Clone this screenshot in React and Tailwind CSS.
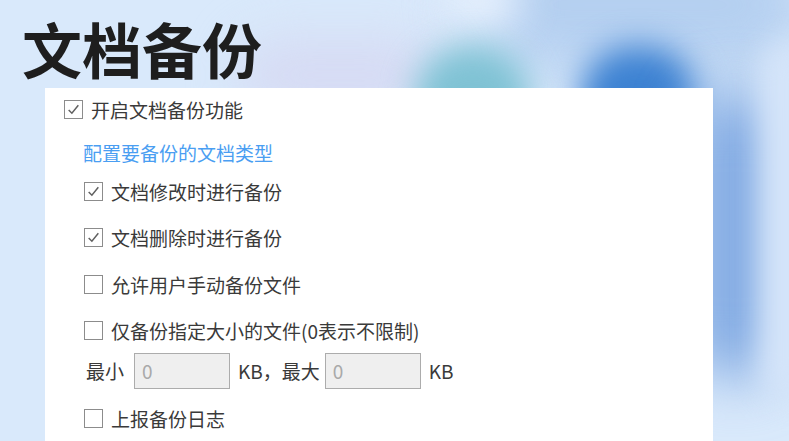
import React from "react";

const font = { fontFamily: '"Noto Sans CJK SC", "Noto Sans", sans-serif' };

function Check({ checked }) {
  return (
    <span className="flex h-[19px] w-[19px] shrink-0 items-center justify-center border border-[#8c8c8c] bg-white">
      {checked && (
        <svg width="15" height="15" viewBox="0 0 14 14" fill="none">
          <path d="M2.5 7.5 L5.5 10.5 L11.5 3" stroke="#606060" strokeWidth="1.4" />
        </svg>
      )}
    </span>
  );
}

function Row({ checked, label, className }) {
  return (
    <div className={`flex h-[28px] items-center gap-[8px] ${className}`}>
      <Check checked={checked} />
      <span className="text-[19px] leading-none text-[#3a3a3a]">{label}</span>
    </div>
  );
}

function SizeInput() {
  return (
    <div className="flex h-[36px] w-[96px] items-center border border-[#acacac] bg-[#efefef] px-[7px] text-[19px] text-[#a9a9a9]">
      0
    </div>
  );
}

export default function App() {
  return (
    <div
      className="relative flex h-[441px] w-[789px] flex-col overflow-hidden bg-[#d9e9fb]"
      style={font}
    >
      {/* blurred background shapes */}
      <div className="absolute left-[470px] top-[-60px] h-[130px] w-[340px] rounded-full bg-[#b4cff0] blur-[30px]" />
      <div className="absolute left-[440px] top-[-30px] h-[60px] w-[80px] rounded-full bg-[#e6f0fd] blur-[20px]" />
      <div className="absolute left-[240px] top-[40px] h-[70px] w-[200px] rounded-full bg-[#d6daf3] blur-[25px]" />
      <div className="absolute left-[415px] top-[46px] h-[105px] w-[115px] rounded-full bg-[#7fc2d4] blur-[16px]" />
      <div className="absolute left-[580px] top-[46px] h-[105px] w-[118px] rounded-full bg-[#3d82d2] blur-[16px]" />
      <div className="absolute left-[690px] top-[90px] h-[290px] w-[90px] rounded-full bg-[#80a9e2] blur-[28px]" />
      <div className="absolute left-[760px] top-[40px] h-[360px] w-[60px] rounded-full bg-[#d4e4f9] blur-[14px]" />

      <h1 className="relative ml-[22px] mt-[18px] text-[60px] font-bold leading-[60px] text-[#1e1e1e]">
        文档备份
      </h1>

      <div className="relative ml-[45px] mt-[10px] w-[668px] flex-1 bg-white pl-[19px]">
        <Row checked label="开启文档备份功能" className="mt-[7px]" />
        <div className="mt-[15px] flex h-[28px] items-center pl-[19px] text-[19px] leading-none text-[#4a9ef2]">
          配置要备份的文档类型
        </div>
        <div className="pl-[20px]">
          <Row checked label="文档修改时进行备份" className="mt-[11px]" />
          <Row checked label="文档删除时进行备份" className="mt-[18px]" />
          <Row label="允许用户手动备份文件" className="mt-[19px]" />
          <Row label="仅备份指定大小的文件(0表示不限制)" className="mt-[18px]" />
          <div className="mt-[9px] flex h-[36px] items-center text-[19px] text-[#3a3a3a]">
            <span className="ml-[2px] mr-[10px]">最小</span>
            <SizeInput />
            <span className="ml-[8px] mr-[5px]">KB，最大</span>
            <SizeInput />
            <span className="ml-[8px]">KB</span>
          </div>
          <Row label="上报备份日志" className="mt-[15px]" />
        </div>
      </div>
    </div>
  );
}
